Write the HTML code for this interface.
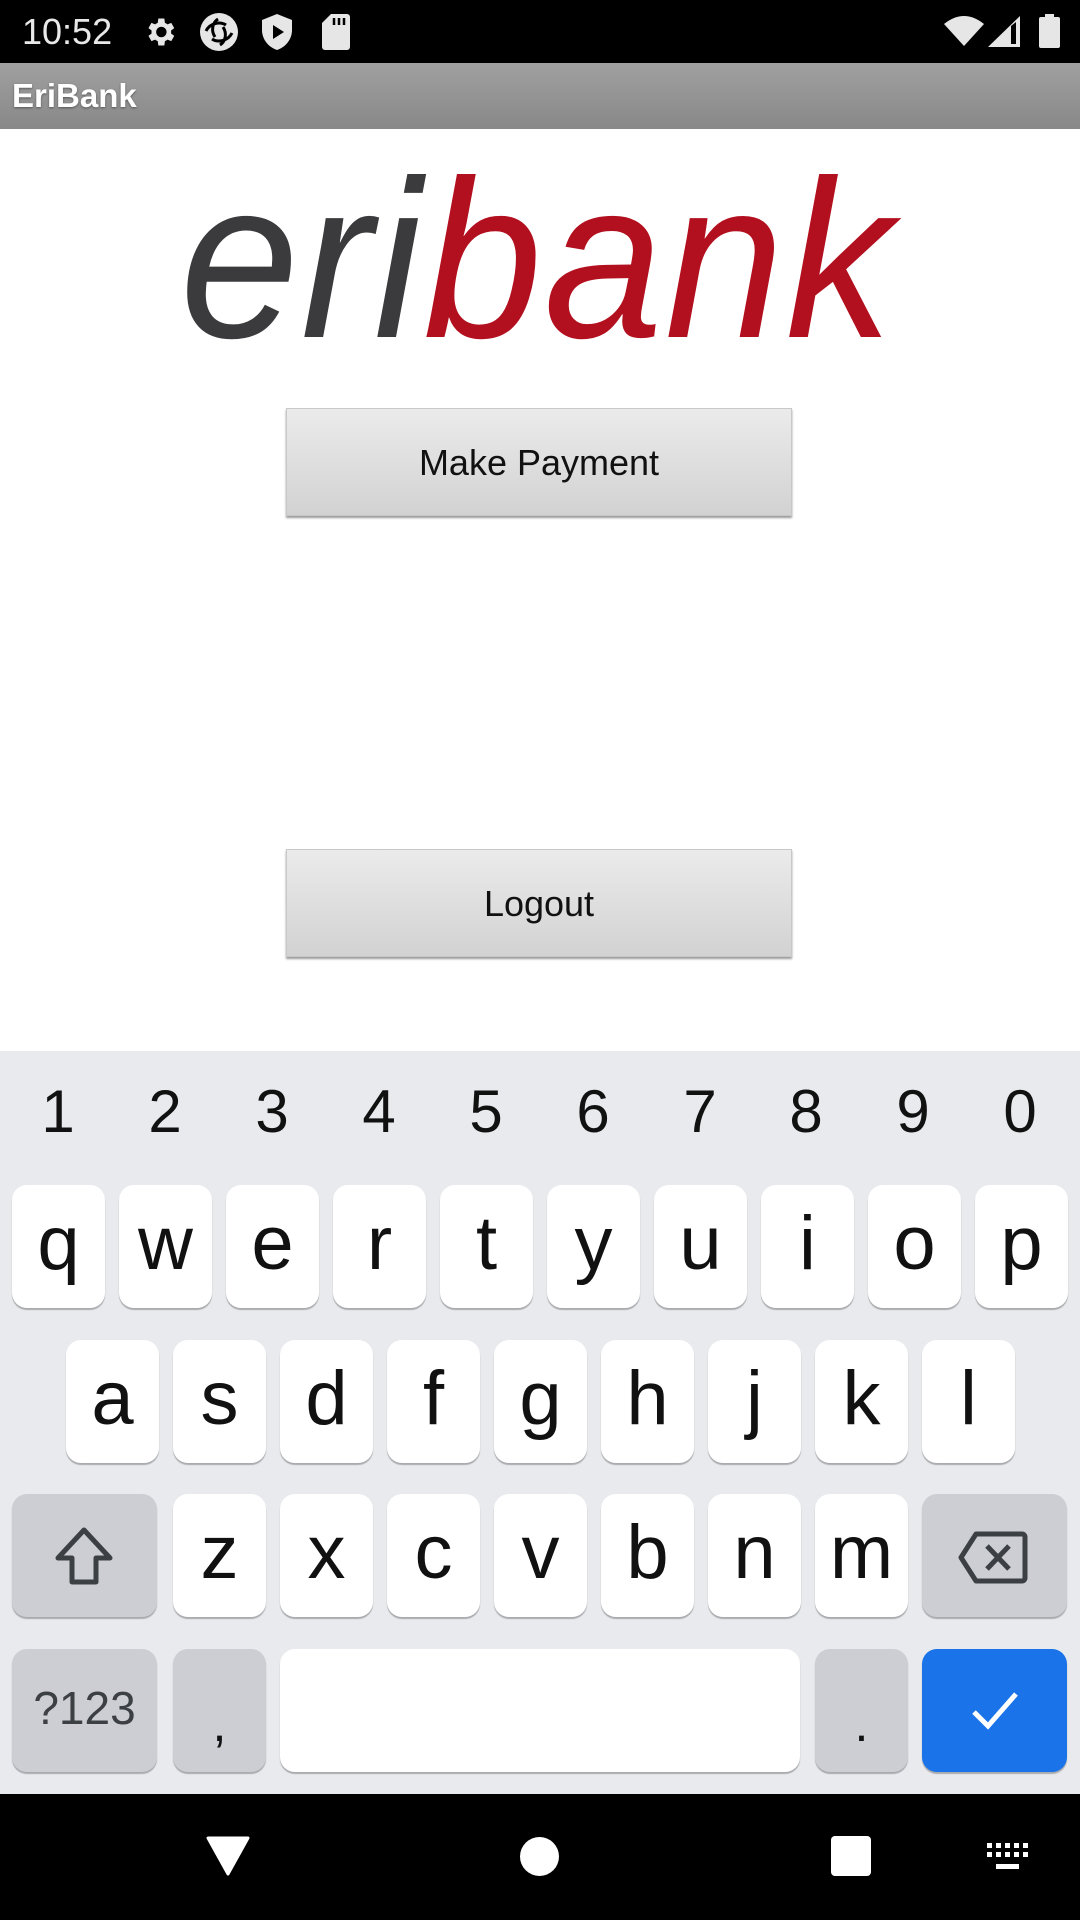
<!DOCTYPE html>
<html><head><meta charset="utf-8"><style>
*{margin:0;padding:0;box-sizing:border-box}
body{width:1080px;height:1920px;overflow:hidden;background:#fff;font-family:"Liberation Sans",sans-serif;position:relative}
.a{position:absolute}
.sb{left:0;top:0;width:1080px;height:63px;background:#000}
.ab{left:0;top:63px;width:1080px;height:66px;background:linear-gradient(#a0a0a0,#888);}
.title{left:12px;top:63px;height:66px;line-height:66px;color:#fff;font-weight:bold;font-size:33px;text-shadow:0 1px 2px #555}
.btn{left:286px;width:506px;height:108px;background:linear-gradient(#ebebeb,#d2d2d2);border:1px solid #c8c8c8;box-shadow:0 2px 2px #999;text-align:center;line-height:108px;font-size:36px;color:#111}
.kb{left:0;top:1051px;width:1080px;height:743px;background:#e8eaed}
.nav{left:0;top:1794px;width:1080px;height:126px;background:#000}
.d{top:1082px;width:60px;text-align:center;font-size:60px;line-height:60px;color:#111}
.k{width:93px;height:123px;background:#fff;border-radius:15px;box-shadow:0 2px 1px #a9abae;text-align:center;font-size:76px;line-height:118px;color:#111}
.g{background:#ccced4}
</style></head><body>
<div class="a sb"></div>
<div class="a" style="left:22px;top:10px;color:#e8e8e8;font-size:36px;line-height:44px">10:52</div>
<svg class="a" style="left:142px;top:14px" width="36" height="36" viewBox="0 0 24 24"><path fill="#e6e6e6" d="M19.4 13a7.5 7.5 0 0 0 0-2l2.1-1.6-2-3.5-2.5 1a7 7 0 0 0-1.7-1L14.9 3h-4l-.4 2.9a7 7 0 0 0-1.7 1l-2.5-1-2 3.5L6.4 11a7.5 7.5 0 0 0 0 2l-2.1 1.6 2 3.5 2.5-1a7 7 0 0 0 1.7 1l.4 2.9h4l.4-2.9a7 7 0 0 0 1.7-1l2.5 1 2-3.5zM12.9 15.5a3.5 3.5 0 1 1 0-7 3.5 3.5 0 0 1 0 7z"/></svg>
<svg class="a" style="left:198px;top:11px" width="42" height="42" viewBox="0 0 42 42"><circle cx="21" cy="21" r="19" fill="#e6e6e6"/><path d="M8 20c4-8 14-10 20-6M34 22c-4 8-14 10-20 6M20 8c-6 4-7 12-3 18M22 34c6-4 7-12 3-18" stroke="#000" stroke-width="3" fill="none"/></svg>
<svg class="a" style="left:262px;top:14px" width="30" height="36" viewBox="0 0 30 36"><path d="M15 0L0 6v10c0 9 6 17 15 20 9-3 15-11 15-20V6z" fill="#e6e6e6"/><path d="M11 11v14l11-7z" fill="#000"/></svg>
<svg class="a" style="left:322px;top:14px" width="28" height="36" viewBox="0 0 28 36"><path d="M9 0h16a3 3 0 0 1 3 3v30a3 3 0 0 1-3 3H3a3 3 0 0 1-3-3V9z" fill="#e6e6e6"/><path d="M12 4v7M17 4v7M22 4v7" stroke="#000" stroke-width="2.5"/></svg>
<svg class="a" style="left:944px;top:16px" width="40" height="30" viewBox="0 0 40 30"><path d="M0 8Q20-8 40 8L20 30z" fill="#e6e6e6"/></svg>
<svg class="a" style="left:988px;top:16px" width="32" height="31" viewBox="0 0 32 31"><path d="M0 31L32 0v31z" fill="#e6e6e6"/><path d="M23 10v18h5V6z" fill="#000"/></svg>
<svg class="a" style="left:1039px;top:14px" width="21" height="34" viewBox="0 0 21 34"><path d="M6 0h9v3h4a2 2 0 0 1 2 2v27a2 2 0 0 1-2 2H2a2 2 0 0 1-2-2V5a2 2 0 0 1 2-2h4z" fill="#e6e6e6"/></svg>
<div class="a ab"></div>
<div class="a title">EriBank</div>
<div class="a" style="left:180px;top:144px;width:760px;height:230px;font-size:225px;line-height:230px;font-style:italic;letter-spacing:2px;white-space:nowrap;transform:scaleX(0.95);transform-origin:left"><span style="color:#3b3b3e">eri</span><span style="color:#b3101f">bank</span></div>
<div class="a btn" style="top:408px">Make Payment</div>
<div class="a btn" style="top:849px">Logout</div>
<div class="a kb"></div>
<div class="a d" style="left:28px">1</div><div class="a d" style="left:135px">2</div><div class="a d" style="left:242px">3</div><div class="a d" style="left:349px">4</div><div class="a d" style="left:456px">5</div><div class="a d" style="left:563px">6</div><div class="a d" style="left:670px">7</div><div class="a d" style="left:776px">8</div><div class="a d" style="left:883px">9</div><div class="a d" style="left:990px">0</div>
<div class="a k" style="left:12px;top:1185px">q</div><div class="a k" style="left:119px;top:1185px">w</div><div class="a k" style="left:226px;top:1185px">e</div><div class="a k" style="left:333px;top:1185px">r</div><div class="a k" style="left:440px;top:1185px">t</div><div class="a k" style="left:547px;top:1185px">y</div><div class="a k" style="left:654px;top:1185px">u</div><div class="a k" style="left:761px;top:1185px">i</div><div class="a k" style="left:868px;top:1185px">o</div><div class="a k" style="left:975px;top:1185px">p</div>
<div class="a k" style="left:66px;top:1340px">a</div><div class="a k" style="left:173px;top:1340px">s</div><div class="a k" style="left:280px;top:1340px">d</div><div class="a k" style="left:387px;top:1340px">f</div><div class="a k" style="left:494px;top:1340px">g</div><div class="a k" style="left:601px;top:1340px">h</div><div class="a k" style="left:708px;top:1340px">j</div><div class="a k" style="left:815px;top:1340px">k</div><div class="a k" style="left:922px;top:1340px">l</div>
<div class="a k g" style="left:12px;top:1494px;width:145px"></div>
<svg class="a" style="left:54px;top:1527px" width="60" height="58" viewBox="0 0 60 58"><path d="M30 3L4 31h14v24h24V31h14z" fill="none" stroke="#3c4043" stroke-width="5" stroke-linejoin="round"/></svg>
<div class="a k" style="left:173px;top:1494px">z</div><div class="a k" style="left:280px;top:1494px">x</div><div class="a k" style="left:387px;top:1494px">c</div><div class="a k" style="left:494px;top:1494px">v</div><div class="a k" style="left:601px;top:1494px">b</div><div class="a k" style="left:708px;top:1494px">n</div><div class="a k" style="left:815px;top:1494px">m</div>
<div class="a k g" style="left:922px;top:1494px;width:145px"></div>
<svg class="a" style="left:958px;top:1531px" width="70" height="53" viewBox="0 0 70 53"><path d="M18 3h46a3 3 0 0 1 3 3v41a3 3 0 0 1-3 3H18L3 26.5z" fill="none" stroke="#3c4043" stroke-width="5" stroke-linejoin="round"/><path d="M29 15l22 23M51 15L29 38" stroke="#3c4043" stroke-width="5"/></svg>
<div class="a k g" style="left:12px;top:1649px;width:145px;font-size:46px;color:#3c4043">?123</div>
<div class="a k g" style="left:173px;top:1649px;font-size:50px;line-height:150px">,</div>
<div class="a k" style="left:280px;top:1649px;width:520px"></div>
<div class="a k g" style="left:815px;top:1649px;font-size:50px;line-height:150px">.</div>
<div class="a k" style="left:922px;top:1649px;width:145px;background:#1a73e8"></div>
<svg class="a" style="left:970px;top:1690px" width="50" height="40" viewBox="0 0 50 40"><path d="M4 22l14 14L46 4" fill="none" stroke="#fff" stroke-width="5"/></svg>
<div class="a nav"></div>
<svg class="a" style="left:206px;top:1836px" width="44" height="40" viewBox="0 0 44 40"><path d="M2 2h40L22 38z" fill="#fff" stroke="#fff" stroke-width="3" stroke-linejoin="round"/></svg>
<div class="a" style="left:520px;top:1837px;width:39px;height:39px;border-radius:50%;background:#fff"></div>
<div class="a" style="left:831px;top:1836px;width:40px;height:40px;border-radius:4px;background:#fff"></div>
<svg class="a" style="left:987px;top:1843px" width="42" height="30" viewBox="0 0 42 30"><g fill="#fff"><rect x="0" y="0" width="5" height="5"/><rect x="9" y="0" width="5" height="5"/><rect x="18" y="0" width="5" height="5"/><rect x="27" y="0" width="5" height="5"/><rect x="36" y="0" width="5" height="5"/><rect x="0" y="9" width="5" height="5"/><rect x="9" y="9" width="5" height="5"/><rect x="18" y="9" width="5" height="5"/><rect x="27" y="9" width="5" height="5"/><rect x="36" y="9" width="5" height="5"/><rect x="9" y="21" width="23" height="5"/></g></svg>
</body></html>
